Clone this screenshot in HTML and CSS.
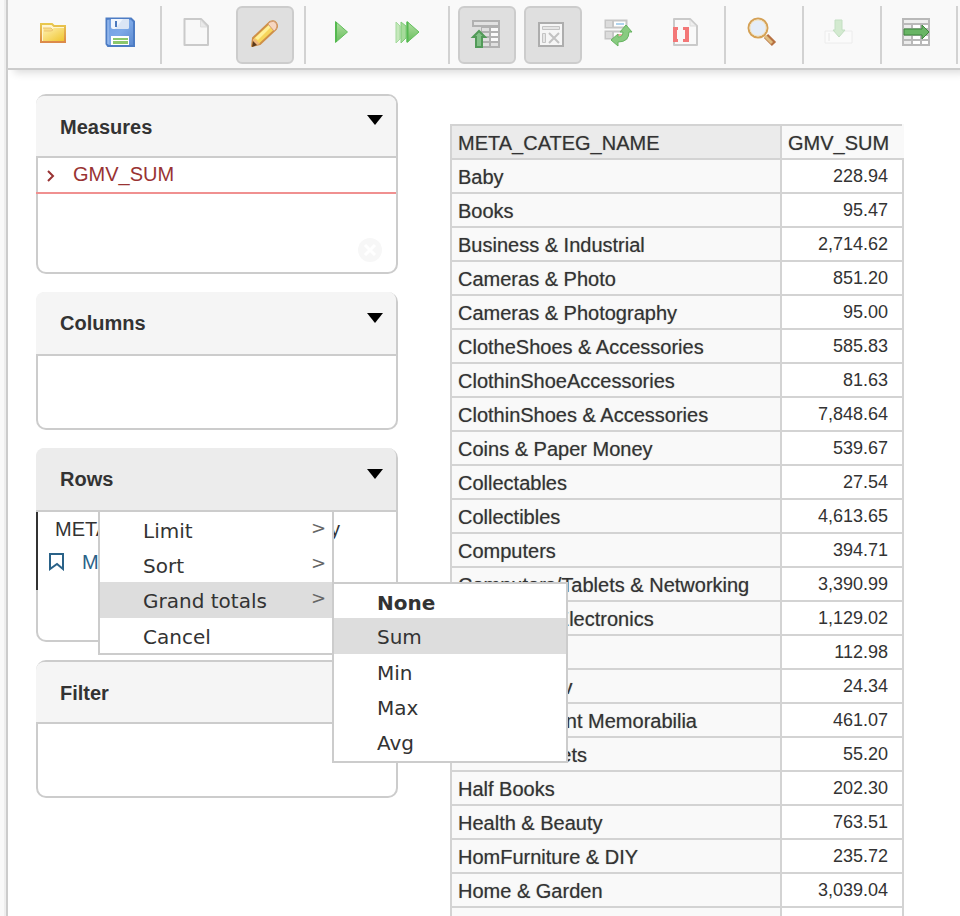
FILE: index.html
```html
<!DOCTYPE html>
<html lang="en">
<head>
<meta charset="utf-8">
<title>Query</title>
<link rel="stylesheet" href="styles.css">
</head>
<body>
<div class="workspace">
<header class="toolbar">
<button class="tool" aria-label="Open"><svg viewBox="0 0 32 32"><defs><linearGradient id="fo" x1="0" y1="0" x2="1" y2="1"><stop offset="0" stop-color="#fff0b0"/><stop offset="1" stop-color="#efc52f"/></linearGradient><linearGradient id="fe" x1="0" y1="0" x2="0" y2="1"><stop offset="0" stop-color="#e9c84d"/><stop offset="1" stop-color="#dc8a4a"/></linearGradient></defs><path d="M2 23V5h11l2 2h11v16z" fill="#fff6cf" stroke="url(#fe)" stroke-width="2"/><path d="M4 11h8l3-2h10v13H4z" fill="url(#fo)"/><path d="M4 9h8l2 2-2 1H5" fill="#f7dc86" stroke="#ecc470"/></svg></button>
<button class="tool" aria-label="Save"><svg viewBox="0 0 32 32"><defs><linearGradient id="sv" x1="0" y1="0" x2="1" y2="1"><stop offset="0" stop-color="#6f9de0"/><stop offset=".5" stop-color="#7da9e8"/><stop offset="1" stop-color="#5b88ce"/></linearGradient></defs><path d="M1.500 -.5H26L29 2.500V27H3L1.500 25z" fill="url(#sv)" stroke="#4d7cc4" stroke-width="2"/><path d="M3 1v24" stroke="#a9c6f2"/><path d="M6 0h18v8q0 2-2 2H8q-2 0-2-2z" fill="#f0f5fd"/><path d="M18 0h6v8q0 2-2 2H10z" fill="#dbe5f5"/><path d="M10 2h2v6h-2z" fill="#4b78bd"/><path d="M6 17h18v9H6z" fill="#fff"/><path d="M8 19h15v2H8zM8 22h15v3H8z" fill="#8bc76c"/></svg></button>
<span class="separator"></span>
<button class="tool" aria-label="New"><svg viewBox="0 0 32 32"><path d="M1.500 0H18l7 7v19H1.500z" fill="#f8f8f8" stroke="#cacaca" stroke-width="2" stroke-linejoin="round"/><path d="M17.500 1v7H24z" fill="#e9e9e9" stroke="#ddd"/></svg></button>
<button class="tool on" aria-label="Edit"><svg viewBox="0 0 32 32"><path d="M3 27l1-8L21 3q4-2 6 1 2 3 0 6L11 25z" fill="#f7d65c" stroke="#cf9048" stroke-width="2" stroke-linejoin="round"/><path d="M6 19L20 6l2 2L9 21z" fill="#fff09a"/><path d="M19 5l2-2q4-2 6 1 2 3 0 6l-2 2z" fill="#f6d6c0" stroke="#d39a74"/><path d="M4 20l2 0 5 5-7 2z" fill="#edb77c"/><path d="M3 28l1-6 4 4z" fill="#5b3a1c"/></svg></button>
<span class="separator"></span>
<button class="tool" aria-label="Run"><svg viewBox="0 0 32 32"><defs><linearGradient id="gr" x1="0" y1="0" x2="0" y2="1"><stop offset="0" stop-color="#b2dfa2"/><stop offset="1" stop-color="#67bd5c"/></linearGradient></defs><path d="M8.500 2.500v21L20.500 13z" fill="url(#gr)" stroke="#62c05c" stroke-linejoin="round"/><path d="M9 3v20" stroke="#55b950" stroke-width="2"/></svg></button>
<button class="tool" aria-label="Auto run"><svg viewBox="0 0 32 32"><path d="M3 3v21l4-4V7z" fill="#c6e8bc" stroke="#a2d99b"/><path d="M8 3v21l5-5V7z" fill="#a6db9b" stroke="#7ecb77"/><path d="M14 2.500v21L26 13z" fill="url(#gr)" stroke="#62c05c" stroke-linejoin="round"/><path d="M14.500 3v20" stroke="#55b950" stroke-width="2"/></svg></button>
<span class="separator"></span>
<button class="tool on" aria-label="Hide parents"><svg viewBox="0 0 32 32"><path d="M1 1h28v28H10V8H1z" fill="#b1b1b1"/><path d="M3 3h24v3H3z" fill="#e2e2e2"/><path d="M11 9h7v3h-7zM12 14h6v3h-6zM12 19h6v3h-6zM12 24h6v3h-6zM20 24h7v3h-7z" fill="#e0e0e0"/><path d="M20 9h7v3h-7zM20 14h7v3h-7zM20 19h7v3h-7z" fill="#fafafa"/><path d="M5 28V18H2l6-6 6 6h-3v10z" fill="#83c088" stroke="#519a58" stroke-width="2"/></svg></button>
<button class="tool on" aria-label="Non empty"><svg viewBox="0 0 32 32"><path d="M2 4h24v23H2z" fill="#f6f6f6" stroke="#adadad" stroke-width="2"/><path d="M5.500 7.500h17v3h-17zM5.500 14.500h3v9h-3z" fill="#e6e6e6" stroke="#c4c4c4"/><path d="M12 14l10 10M22 14L12 24" stroke="#c2c2c2" stroke-width="2"/></svg></button>
<button class="tool" aria-label="Swap axis"><svg viewBox="0 0 32 32"><path d="M2.500 1.500h21v7h-21zM2.500 12.500h21v7h-21z" fill="#fff" stroke="#c6c6c6" stroke-width="2"/><path d="M3 2h7v6H3zM3 13h7v6H3z" fill="#dcdcdc"/><path d="M10 2v6M10 13v6" stroke="#c6c6c6" stroke-width="2"/><path d="M13 5h8" stroke="#b0d4ee" stroke-width="2"/><path d="M14 16h7" stroke="#f0aaa4" stroke-width="2"/><path d="M23 6l6 7h-3q0 10-11 10v4l-7-6 7-6v3q5 0 5-5h-3z" fill="#88cb80" stroke="#66b360" stroke-linejoin="round"/></svg></button>
<button class="tool" aria-label="Show MDX"><svg viewBox="0 0 32 32"><path d="M5 0H21l7 7v19H5z" fill="#f9f9f9" stroke="#cacaca" stroke-width="2" stroke-linejoin="round"/><path d="M21 1v6h6z" fill="#eee" stroke="#ddd"/><path d="M4 8h5v3H8v9h1v3H4zM14 8h6v15h-6v-3h2v-9h-2z" fill="#f37878"/></svg></button>
<span class="separator"></span>
<button class="tool" aria-label="Zoom"><svg viewBox="0 0 32 32"><path d="M19 17l8 8" stroke="#b77142" stroke-width="6"/><path d="M18 17l7 7" stroke="#e0bd80" stroke-width="3"/><circle cx="11" cy="9" r="9.500" fill="#e5edf8" stroke="#d5a155" stroke-width="2"/><circle cx="11" cy="9" r="8" fill="none" stroke="#f3e2bd"/></svg></button>
<span class="separator"></span>
<button class="tool" aria-label="Drill through"><svg viewBox="0 0 32 32"><path d="M0 12h27v12H0z" fill="#fbfbfb" stroke="#ececec"/><path d="M4 14v8" stroke="#e6e6e6"/><path d="M10 1h7v10h3l-6 7-6-7h2z" fill="#d3ead0" stroke="#c3dfc2"/></svg></button>
<span class="separator"></span>
<button class="tool" aria-label="Export"><svg viewBox="0 0 32 32"><path d="M-1 -1h28v28H-1z" fill="#b9b9b9"/><path d="M1 1h24v3H1z" fill="#eee"/><path d="M1 6h7v3H1zM1 17h7v3H1zM1 22h7v3H1z" fill="#ececec"/><path d="M10 6h7v3h-7zM19 6h6v3h-6zM10 17h7v3h-7zM19 17h6v3h-6zM10 22h7v3h-7zM19 22h6v3h-6z" fill="#fff"/><path d="M1 10h18V6l7 7-7 7v-4H1z" fill="#69b565" stroke="#3f873e"/></svg></button>
<span class="separator"></span>
</header>
<main class="content">
<aside class="axes">
<section class="axis measures"><h2>Measures<button class="toggle" aria-label="Collapse measures"></button></h2>
<div class="body"><a class="measure" href="#"><svg class="chevron" viewBox="0 0 8 12"><path d="M1 1l5 5-5 5"/></svg>GMV_SUM</a>
<button class="clear" aria-label="Clear"><svg viewBox="0 0 24 24"><circle cx="12" cy="12" r="12" fill="#f7f7f7"/><path d="M7 7l10 10M17 7L7 17" stroke="#fff" stroke-width="3"/></svg></button></div></section>
<section class="axis flat"><h2>Columns<button class="toggle" aria-label="Collapse columns"></button></h2><div class="body"></div></section>
<section class="axis flat rows"><h2>Rows<button class="toggle" aria-label="Collapse rows"></button></h2>
<div class="body"><div class="hierarchy"><div class="dimension"><span>META</span><span class="tail">y</span></div><a class="level" href="#"><svg class="mark" viewBox="0 0 16 18"><path d="M1 1h13v15l-6-5-7 5z"/></svg>M</a></div>
<ul class="menu main-menu"><li><button>Limit<span class="more">&gt;</span></button></li><li><button>Sort<span class="more">&gt;</span></button></li><li class="current"><button>Grand totals<span class="more">&gt;</span></button>
<ul class="menu submenu"><li><button><b>None</b></button></li><li class="current"><button>Sum</button></li><li><button>Min</button></li><li><button>Max</button></li><li><button>Avg</button></li></ul></li><li><button>Cancel</button></li></ul>
</div></section>
<section class="axis"><h2>Filter<button class="toggle" aria-label="Collapse filter"></button></h2><div class="body"></div></section>
</aside>
<div class="results">
<table>
<thead><tr><th class="corner">META_CATEG_NAME</th><th>GMV_SUM</th></tr></thead>
<tbody>
<tr><th>Baby</th><td>228.94</td></tr>
<tr><th>Books</th><td>95.47</td></tr>
<tr><th>Business &amp; Industrial</th><td>2,714.62</td></tr>
<tr><th>Cameras &amp; Photo</th><td>851.20</td></tr>
<tr><th>Cameras &amp; Photography</th><td>95.00</td></tr>
<tr><th>ClotheShoes &amp; Accessories</th><td>585.83</td></tr>
<tr><th>ClothinShoeAccessories</th><td>81.63</td></tr>
<tr><th>ClothinShoes &amp; Accessories</th><td>7,848.64</td></tr>
<tr><th>Coins &amp; Paper Money</th><td>539.67</td></tr>
<tr><th>Collectables</th><td>27.54</td></tr>
<tr><th>Collectibles</th><td>4,613.65</td></tr>
<tr><th>Computers</th><td>394.71</td></tr>
<tr><th>Computers/Tablets &amp; Networking</th><td>3,390.99</td></tr>
<tr><th>Consumer Electronics</th><td>1,129.02</td></tr>
<tr><th>Crafts</th><td>112.98</td></tr>
<tr><th>DVDs &amp; Mov</th><td>24.34</td></tr>
<tr><th>Entertainment Memorabilia</th><td>461.07</td></tr>
<tr><th>Events Tickets</th><td>55.20</td></tr>
<tr><th>Half Books</th><td>202.30</td></tr>
<tr><th>Health &amp; Beauty</th><td>763.51</td></tr>
<tr><th>HomFurniture &amp; DIY</th><td>235.72</td></tr>
<tr><th>Home &amp; Garden</th><td>3,039.04</td></tr>
<tr><th></th><td></td></tr>
</tbody>
</table>
</div>
</main>
</div>
</body>
</html>
```
FILE: styles.css
```css
* { box-sizing: border-box; }
html, body { height: 100%; }
body {
  margin: 0;
  overflow: hidden;
  background: #f9f9f9;
  color: #333;
  font: 20px/24px "Liberation Sans", Arial, sans-serif;
}
button {
  margin: 0;
  padding: 0;
  border: 0;
  background: none;
  color: inherit;
  font: inherit;
}
a { color: inherit; text-decoration: none; }
.workspace {
  min-height: 100%;
  margin-left: 6px;
  border-left: 2px solid #ccc;
  background: #fff;
  box-shadow: -2px 0 0 #eee;
}
.toolbar {
  display: flex;
  gap: 8px;
  height: 70px;
  padding: 6px 0 4px 18px;
  overflow: hidden;
  border-bottom: 2px solid #ccc;
  background: #f9f9f9;
  box-shadow: 6px 3px 8px #ddd;
}
.tool {
  display: flex;
  flex: none;
  align-items: center;
  justify-content: center;
  width: 58px;
  height: 58px;
  border: 2px solid transparent;
  border-radius: 6px;
}
.tool.on { border-color: #ccc; background: #dfdfdf; }
.tool svg { width: 32px; height: 32px; overflow: visible; }
.separator {
  flex: none;
  width: 2px;
  height: 58px;
  margin-left: 2px;
  background: #d2d2d2;
}
.separator:last-child { margin-left: 0; }
.content { display: flex; gap: 52px; padding: 24px 56px 0 28px; }
.axes { display: flex; flex: none; flex-direction: column; gap: 18px; width: 362px; }
.axis { border: 2px solid #ccc; border-radius: 10px; }
.axis h2 {
  display: flex;
  justify-content: space-between;
  height: 62px;
  margin: 0 0 0 -2px;
  padding: 19px 13px 0 24px;
  border-bottom: 2px solid #ccc;
  border-radius: 8px 8px 0 0;
  background: #f5f5f5;
  font-size: 20px;
}
.toggle {
  align-self: flex-start;
  width: 0;
  border: solid transparent;
  border-width: 10px 8px 0;
  border-top-color: #000;
}
.flat { border-top: 0; }
.flat h2 { height: 64px; }
.flat .toggle { margin-top: 2px; }
.body { position: relative; height: 72px; }
.measures .body { height: 114px; }
.rows .body { height: 128px; }
.rows h2 { background: #ececec; }
.measure {
  display: flex;
  align-items: center;
  gap: 18px;
  height: 36px;
  margin-left: -2px;
  padding: 0 0 2px 11px;
  border-bottom: 2px solid #f09090;
  color: #993333;
}
.chevron { width: 8px; height: 12px; margin-top: 3px; fill: none; stroke: #933; stroke-width: 2; }
.clear { position: absolute; right: 14px; bottom: 10px; width: 24px; height: 24px; }
.clear svg { display: block; }
.hierarchy {
  height: 78px;
  margin-left: -2px;
  padding: 5px 0 0 11px;
  border-left: 2px solid #333;
}
.dimension {
  display: flex;
  justify-content: space-between;
  padding: 0 56px 0 6px;
}
.level { display: flex; align-items: center; gap: 17px; margin-top: 9px; color: #2a6288; }
.mark { width: 16px; height: 18px; fill: none; stroke: #2a6288; stroke-width: 2; }
.menu {
  position: absolute;
  z-index: 1;
  width: 236px;
  margin: 0;
  padding: 0;
  border: 2px solid #ccc;
  background: #fff;
  font: 20px/24px "DejaVu Sans", Verdana, sans-serif;
  list-style: none;
}
.main-menu { top: 0; left: 60px; border-top: 0; }
.menu li { position: relative; }
.menu button {
  display: flex;
  justify-content: space-between;
  width: 100%;
  height: 35px;
  padding: 7px 6px 0 43px;
  text-align: left;
}
.menu .current > button { height: 36px; background: #ddd; }
.more { margin-top: -3px; color: #666; font-size: 18px; }
.submenu { top: 0; left: 232px; padding-bottom: 2px; }
.submenu li:first-child button { height: 34px; }
.results { flex: 1; min-width: 0; padding-top: 30px; }
table { width: 100%; border-collapse: collapse; }
tr { height: 34px; }
th, td { padding: 4px 6px 2px; border: 2px solid #d3d3d3; white-space: nowrap; }
th {
  background: #f9f9f9;
  font-weight: normal;
  text-align: left;
  text-shadow: 0 0 1px #999;
}
.corner { width: 330px; background: #ebebeb; }
thead th:last-child { border-right-color: #f9f9f9; }
td { padding: 3px 14px 3px 6px; font-size: 18px; text-align: right; }
```
